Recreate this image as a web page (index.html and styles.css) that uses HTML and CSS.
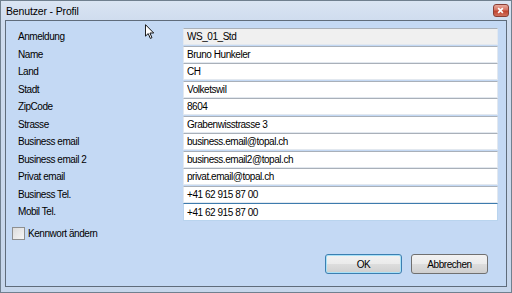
FILE: index.html
```html
<!DOCTYPE html>
<html lang="de">
<head>
    <meta charset="UTF-8">
    <meta name="viewport" content="width=device-width, initial-scale=1.0">
    <title>Benutzer - Profil</title>
    <link rel="stylesheet" href="styles.css">
</head>
<body>
    <div class="window">
        <div class="titlebar">
            <span class="title">Benutzer - Profil</span>
            <div class="close">
                <svg viewBox="0 0 16 13" width="16" height="13">
                    <path d="M5.5 4 L10.5 9 M10.5 4 L5.5 9" stroke="#fff" stroke-width="1.8" fill="none"></path>
                </svg>
            </div>
        </div>
        <div class="client">
            <div class="fields">
                <label class="lbl">Anmeldung</label>
                <input class="txt readonly" value="WS_01_Std" readonly>
                <label class="lbl">Name</label>
                <input class="txt" value="Bruno Hunkeler">
                <label class="lbl">Land</label>
                <input class="txt" value="CH">
                <label class="lbl">Stadt</label>
                <input class="txt" value="Volketswil">
                <label class="lbl">ZipCode</label>
                <input class="txt" value="8604">
                <label class="lbl">Strasse</label>
                <input class="txt" value="Grabenwisstrasse 3">
                <label class="lbl">Business email</label>
                <input class="txt" value="business.email@topal.ch">
                <label class="lbl">Business email 2</label>
                <input class="txt" value="business.email2@topal.ch">
                <label class="lbl">Privat email</label>
                <input class="txt" value="privat.email@topal.ch">
                <label class="lbl">Business Tel.</label>
                <input class="txt" value="+41 62 915 87 00">
                <label class="lbl">Mobil Tel.</label>
                <input class="txt focused" value="+41 62 915 87 00">
            </div>
            <label class="check"><span class="box"></span>Kennwort ändern</label>
            <div class="buttons">
                <button class="btn default">OK</button>
                <button class="btn">Abbrechen</button>
            </div>
        </div>
        <svg class="cursor" viewBox="0 0 12 17" width="11" height="16">
            <path d="M0.5 0.5 L0.5 13 L3.5 10.2 L5.8 15.5 L7.6 14.7 L5.4 9.6 L9.5 9.6 Z" fill="#fff" stroke="#000" stroke-width="1"></path>
        </svg>
    </div>
</body>
</html>
```

FILE: styles.css
```css
body {
    margin: 0;
    font-family: "Liberation Sans", Arial, sans-serif;
    font-size: 10px;
    letter-spacing: -0.45px;
    color: #000;
}
.window {
    position: relative;
    width: 512px;
    height: 293px;
    box-sizing: border-box;
    border: 1px solid #70808f;
    background: linear-gradient(180deg, #dae5f3 0px, #cfdcee 20px, #c6d6eb 100%);
    padding: 0 4px 5px 4px;
    display: flex;
    flex-direction: column;
}
.titlebar {
    height: 19px;
    display: flex;
    align-items: flex-start;
    justify-content: space-between;
}
.title {
    font-size: 10.5px;
    letter-spacing: -0.15px;
    margin-top: 4px;
    margin-left: 1px;
}
.close {
    width: 16px;
    height: 13px;
    margin-top: 3px;
    margin-right: -2px;
    box-sizing: border-box;
    border: 1px solid #8a3f36;
    border-radius: 3px;
    background: linear-gradient(180deg, #e9a99c 0%, #d47363 45%, #c0432f 55%, #d0705c 100%);
    display: flex;
}
.close svg {
    margin: -1px 0 0 -1px;
}
.client {
    flex: 1;
    border: 1px solid #5f6c7b;
    background: #c4d9f4;
    padding: 7px 8px 12px 12px;
    display: flex;
    flex-direction: column;
}
.fields {
    display: grid;
    grid-template-columns: 165px 1fr;
    grid-auto-rows: 17.5px;
    align-items: center;
}
.txt {
    font: inherit;
    letter-spacing: inherit;
    height: 17px;
    box-sizing: border-box;
    margin: 0;
    padding: 0 3px;
    background: #fff;
    border: 1px solid #e2e8ef;
    border-top-color: #a9b0b9;
    outline: none;
    color: #000;
    align-self: start;
}
.txt.readonly {
    background: #f0f0f0;
}
.txt.focused {
    border-color: #b9d4ee;
    border-top-color: #3d7bad;
    height: 18px;
}
.check {
    display: flex;
    align-items: center;
    margin-top: 6px;
    margin-left: -6px;
}
.box {
    width: 11px;
    height: 11px;
    border: 1px solid #8e8f8f;
    background: linear-gradient(135deg, #dcdcdc, #f6f6f6);
    margin-right: 3px;
}
.buttons {
    margin-top: auto;
    display: flex;
    justify-content: flex-end;
    gap: 9px;
    padding-right: 10px;
}
.btn {
    font: inherit;
    letter-spacing: inherit;
    width: 77px;
    height: 20px;
    border: 1px solid #707070;
    border-radius: 3px;
    background: linear-gradient(180deg, #f2f2f2 0%, #ebebeb 48%, #dddddd 52%, #cfcfcf 100%);
    color: #000;
    padding: 0;
}
.btn.default {
    border-color: #3c7fb1;
    box-shadow: inset 0 0 0 1px #a8e1f7;
}
.cursor {
    position: absolute;
    left: 144px;
    top: 23px;
}
```
